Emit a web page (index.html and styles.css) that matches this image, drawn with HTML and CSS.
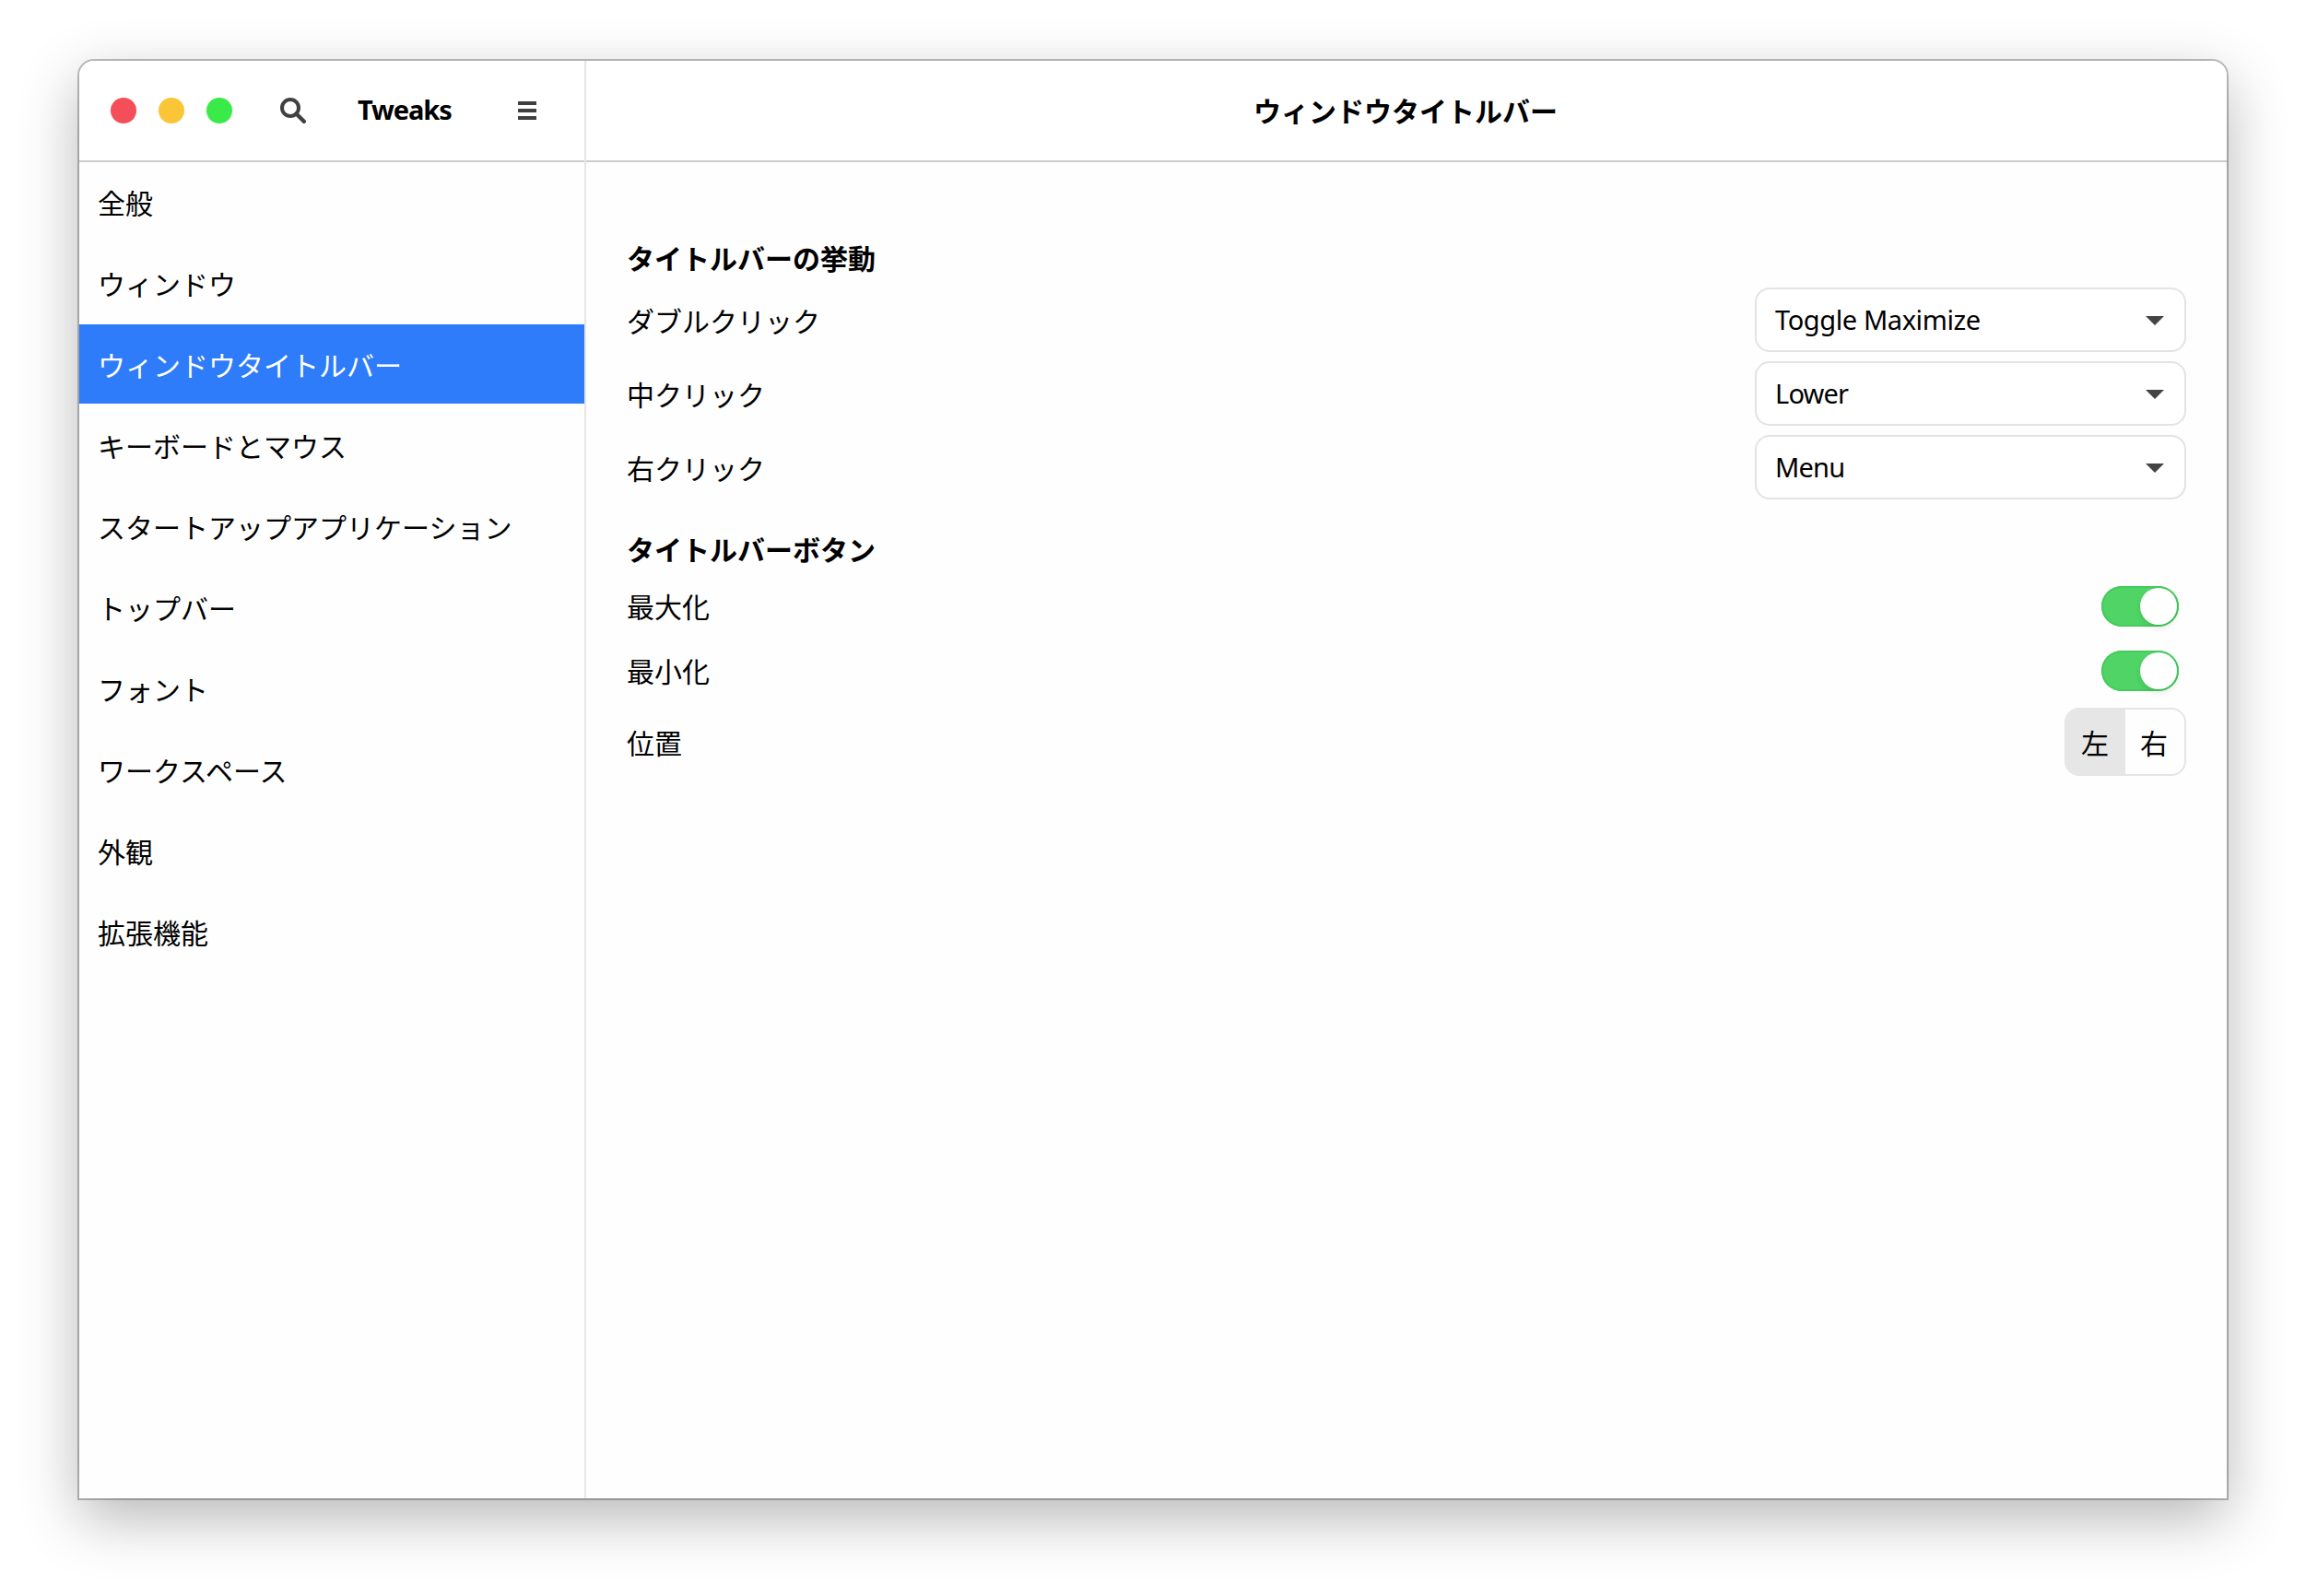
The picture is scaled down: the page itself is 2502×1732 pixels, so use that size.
FILE: index.html
```html
<!DOCTYPE html>
<html lang="ja">
<head>
<meta charset="utf-8">
<title>Tweaks</title>
<link rel="stylesheet" href="styles.css">
</head>
<body>
<div class="window">
  <aside class="sidebar">
    <header class="header header-side">
      <div class="controls">
        <span class="control close"></span>
        <span class="control minimize"></span>
        <span class="control maximize"></span>
      </div>
      <svg class="icon search" viewBox="0 0 28 28" width="28" height="28"><circle cx="11" cy="11" r="9" fill="none" stroke="#404040" stroke-width="4"/><path d="M17.5 17.5 L25.8 25.8" stroke="#404040" stroke-width="4.4" stroke-linecap="round"/></svg>
      <h1 class="app-title">Tweaks</h1>
      <svg class="icon menu" viewBox="0 0 20 20" width="20" height="20" fill="#3f3f3f"><path d="M0 0h20v4H0zM0 8h20v4H0zM0 16h20v4H0z"/></svg>
    </header>
    <nav class="nav">
      <a class="nav-item">全般</a>
      <a class="nav-item">ウィンドウ</a>
      <a class="nav-item selected">ウィンドウタイトルバー</a>
      <a class="nav-item">キーボードとマウス</a>
      <a class="nav-item">スタートアップアプリケーション</a>
      <a class="nav-item">トップバー</a>
      <a class="nav-item">フォント</a>
      <a class="nav-item">ワークスペース</a>
      <a class="nav-item">外観</a>
      <a class="nav-item">拡張機能</a>
    </nav>
  </aside>
  <main class="main">
    <header class="header header-main"><h2 class="page-title">ウィンドウタイトルバー</h2></header>
    <div class="content">
      <h3 class="group-title">タイトルバーの挙動</h3>
      <div class="row"><span>ダブルクリック</span><div class="select"><span class="value long">Toggle Maximize</span><svg class="arrow" viewBox="0 0 20 10" width="20" height="10"><path d="M0 0h20L10 10z" fill="#444"/></svg></div></div>
      <div class="row"><span>中クリック</span><div class="select"><span class="value">Lower</span><svg class="arrow" viewBox="0 0 20 10" width="20" height="10"><path d="M0 0h20L10 10z" fill="#444"/></svg></div></div>
      <div class="row"><span>右クリック</span><div class="select"><span class="value">Menu</span><svg class="arrow" viewBox="0 0 20 10" width="20" height="10"><path d="M0 0h20L10 10z" fill="#444"/></svg></div></div>
      <h3 class="group-title second">タイトルバーボタン</h3>
      <div class="row toggle-row"><span class="toggle-label">最大化</span><div class="switch"><span class="knob"></span></div></div>
      <div class="row toggle-row"><span class="toggle-label">最小化</span><div class="switch"><span class="knob"></span></div></div>
      <div class="row"><span>位置</span><div class="segmented"><span class="segment active">左</span><span class="segment">右</span></div></div>
    </div>
  </main>
</div>
</body>
</html>
```

FILE: styles.css
```css
* { box-sizing: border-box; }

body {
  margin: 0;
  padding: 66px 86px 106px;
  height: 1732px;
  background: #fff;
  color: #000;
  font-family: "Noto Sans CJK JP", sans-serif;
  font-size: 30px;
  line-height: 42px;
  overflow: hidden;
}

h1, h2, h3 { margin: 0; font-size: 30px; font-weight: 700; }

svg { display: block; flex: none; }

.window {
  display: flex;
  height: 1560px;
  background: #fefefe;
  border-radius: 16px 16px 0 0;
  box-shadow: 0 0 0 2px rgba(0, 0, 0, .25), 0 21px 64px rgba(0, 0, 0, .29);
}

.sidebar {
  flex: none;
  width: 550px;
  border-right: 2px solid #e6e6e6;
}

.header {
  display: flex;
  align-items: center;
  height: 110px;
  border-bottom: 2px solid #ccc;
  background: #fff;
}

.header-side { padding-left: 34px; border-top-left-radius: 16px; }

.header-main { justify-content: center; border-top-right-radius: 16px; }

.page-title { padding: 0 2px 3px 0; }

.controls { display: flex; gap: 24px; }

.control { width: 28px; height: 28px; border-radius: 50%; }
.close { background: #f44f59; }
.minimize { background: #fac536; }
.maximize { background: #39ea49; }

.search { margin-left: 52px; }

.app-title {
  width: 102px;
  margin-left: 56px;
  padding-bottom: 2px;
  font-family: "Noto Sans", sans-serif;
  font-size: 29px;
  letter-spacing: -1.1px;
  white-space: nowrap;
}

.menu { margin-left: 72px; }

.nav { display: flex; flex-direction: column; gap: 2px; }

.nav-item {
  height: 86px;
  padding-left: 20px;
  line-height: 86px;
  white-space: nowrap;
}

.selected { background: #2e7cf9; color: #fff; }

.main { flex: 1; }

.content {
  display: flex;
  flex-direction: column;
  gap: 10px;
  padding: 84px 44px 0;
}

.group-title { height: 42px; line-height: 38px; }

.second { margin-top: 24px; }

.row {
  display: flex;
  align-items: center;
  justify-content: space-between;
}

.toggle-row { height: 60px; padding-right: 8px; }

.toggle-label { padding-bottom: 2px; }

.select {
  display: flex;
  align-items: center;
  justify-content: space-between;
  width: 468px;
  height: 70px;
  padding: 0 22px 0 20px;
  border: 2px solid #e3e3e3;
  border-radius: 16px;
  background: #fff;
}

.value { font-family: "Noto Sans", sans-serif; font-size: 29px; letter-spacing: -.8px; }

.long { letter-spacing: -.4px; }

.arrow { margin-top: 2px; }

.switch {
  display: flex;
  justify-content: flex-end;
  width: 84px;
  height: 44px;
  padding: 2px;
  border-radius: 22px;
  background: #4fd465;
  box-shadow: inset 0 0 0 2px #45ca5c;
}

.knob {
  width: 40px;
  height: 40px;
  border-radius: 50%;
  background: #fff;
  box-shadow: 0 4px 6px rgba(0, 0, 0, .09);
}

.segmented {
  display: flex;
  width: 132px;
  height: 74px;
  border: 2px solid #e5e5e5;
  border-radius: 16px;
  overflow: hidden;
}

.segment { flex: 1; line-height: 70px; padding-left: 16px; }
.active { background: #e6e6e6; }
```
